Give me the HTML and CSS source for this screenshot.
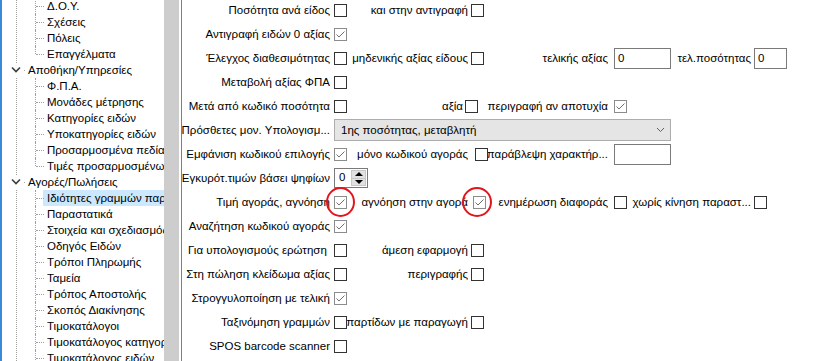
FILE: index.html
```html
<!DOCTYPE html>
<html lang="el">
<head>
    <meta charset="UTF-8">
    <title>Ιδιότητες γραμμών παραστατικών</title>
    <link rel="stylesheet" href="styles.css">
</head>
<body>
<div class="app">
    <div class="tree">
        <ul class="kids">
            <li><span>Δ.Ο.Υ.</span></li>
            <li><span>Σχέσεις</span></li>
            <li><span>Πόλεις</span></li>
            <li><span>Επαγγέλματα</span></li>
        </ul>
        <div class="root">
            <span class="toggle"><svg width="10" height="14" viewBox="0 0 10 14"><polyline points="1,4.5 5,8.5 9,4.5" fill="none" stroke="#3c3c3c" stroke-width="1.6"/></svg></span>
            <span class="stub"></span>Αποθήκη/Υπηρεσίες
        </div>
        <ul class="kids">
            <li><span>Φ.Π.Α.</span></li>
            <li><span>Μονάδες μέτρησης</span></li>
            <li><span>Κατηγορίες ειδών</span></li>
            <li><span>Υποκατηγορίες ειδών</span></li>
            <li><span>Προσαρμοσμένα πεδία</span></li>
            <li><span>Τιμές προσαρμοσμένων πεδίων</span></li>
        </ul>
        <div class="root">
            <span class="toggle"><svg width="10" height="14" viewBox="0 0 10 14"><polyline points="1,4.5 5,8.5 9,4.5" fill="none" stroke="#3c3c3c" stroke-width="1.6"/></svg></span>
            <span class="stub"></span>Αγορές/Πωλήσεις
        </div>
        <ul class="kids">
            <li><span class="selected">Ιδιότητες γραμμών παραστατικών</span></li>
            <li><span>Παραστατικά</span></li>
            <li><span>Στοιχεία και σχεδιασμός τύπων</span></li>
            <li><span>Οδηγός Ειδών</span></li>
            <li><span>Τρόποι Πληρωμής</span></li>
            <li><span>Ταμεία</span></li>
            <li><span>Τρόπος Αποστολής</span></li>
            <li><span>Σκοπός Διακίνησης</span></li>
            <li><span>Τιμοκατάλογοι</span></li>
            <li><span>Τιμοκατάλογος κατηγοριών</span></li>
            <li><span>Τιμοκατάλογος ειδών</span></li>
            <li><span>Εκπτώσεις</span></li>
        </ul>
    </div>
    <div class="splitter"></div>

    <div class="form">
        <div class="row">
            <label class="lbl c1">Ποσότητα ανά είδος</label><span class="cb c2"></span>
            <label class="lbl c3">και στην αντιγραφή</label><span class="cb c4"></span>
        </div>
        <div class="row">
            <label class="lbl c1">Αντιγραφή ειδών 0 αξίας</label><span class="cb on c2"><svg width="11" height="11" viewBox="0 0 11 11"><polyline points="1.5,5.5 4,8 9.5,2.5" fill="none" stroke="#6e6e6e" stroke-width="1"/></svg></span>
        </div>
        <div class="row">
            <label class="lbl c1">Έλεγχος διαθεσιμότητας</label><span class="cb c2"></span>
            <label class="lbl c3">μηδενικής αξίας είδους</label><span class="cb c4"></span>
            <label class="lbl c5">τελικής αξίας</label><span class="field wide c6">0</span>
            <label class="lbl c7">τελ.ποσότητας</label><span class="field c8">0</span>
        </div>
        <div class="row">
            <label class="lbl c1">Μεταβολή αξίας ΦΠΑ</label><span class="cb c2"></span>
        </div>
        <div class="row">
            <label class="lbl c1">Μετά από κωδικό ποσότητα</label><span class="cb c2"></span>
            <label class="lbl c3 pad8">αξία</label><span class="cb c4 back6"></span>
            <label class="lbl c5">περιγραφή αν αποτυχία</label><span class="cb on c6"><svg width="11" height="11" viewBox="0 0 11 11"><polyline points="1.5,5.5 4,8 9.5,2.5" fill="none" stroke="#6e6e6e" stroke-width="1"/></svg></span>
        </div>
        <div class="row">
            <label class="lbl c1">Πρόσθετες μον. Υπολογισμ...</label>
            <div class="combo">
                <span>1ης ποσότητας, μεταβλητή</span>
                <svg width="9" height="6" viewBox="0 0 9 6"><polyline points="1,1 4.5,4.5 8,1" fill="none" stroke="#606060" stroke-width="1"/></svg>
            </div>
        </div>
        <div class="row">
            <label class="lbl c1">Εμφάνιση κωδικού επιλογής</label><span class="cb on c2"><svg width="11" height="11" viewBox="0 0 11 11"><polyline points="1.5,5.5 4,8 9.5,2.5" fill="none" stroke="#6e6e6e" stroke-width="1"/></svg></span>
            <label class="lbl c3">μόνο κωδικού αγοράς</label><span class="cb c4 fwd4"></span>
            <label class="lbl c5">παράβλεψη χαρακτήρ...</label><span class="field wide c6"></span>
        </div>
        <div class="row">
            <label class="lbl c1">Εγκυρότ.τιμών βάσει ψηφίων</label>
            <div class="spin">
                <span class="spin-val">0</span>
                <span class="spin-btns">
                    <span class="arrow up"></span>
                    <span class="arrow down"></span>
                </span>
            </div>
        </div>
        <div class="row">
            <label class="lbl c1">Τιμή αγοράς, αγνόηση</label><span class="cb on c2"><svg width="11" height="11" viewBox="0 0 11 11"><polyline points="1.5,5.5 4,8 9.5,2.5" fill="none" stroke="#6e6e6e" stroke-width="1"/></svg><i class="ring"></i></span>
            <label class="lbl c3">αγνόηση στην αγορά</label><span class="cb on c4 fwd2"><svg width="11" height="11" viewBox="0 0 11 11"><polyline points="1.5,5.5 4,8 9.5,2.5" fill="none" stroke="#6e6e6e" stroke-width="1"/></svg><i class="ring ring-b"></i></span>
            <label class="lbl c5">ενημέρωση διαφοράς</label><span class="cb c6"></span>
            <label class="lbl c7">χωρίς κίνηση παραστ...</label><span class="cb c8"></span>
        </div>
        <div class="row">
            <label class="lbl c1">Αναζήτηση κωδικού αγοράς</label><span class="cb on c2"><svg width="11" height="11" viewBox="0 0 11 11"><polyline points="1.5,5.5 4,8 9.5,2.5" fill="none" stroke="#6e6e6e" stroke-width="1"/></svg></span>
        </div>
        <div class="row">
            <label class="lbl c1">Για υπολογισμούς ερώτηση&nbsp;</label><span class="cb c2"></span>
            <label class="lbl c3">άμεση εφαρμογή</label><span class="cb c4"></span>
        </div>
        <div class="row">
            <label class="lbl c1">Στη πώληση κλείδωμα αξίας</label><span class="cb c2"></span>
            <label class="lbl c3">περιγραφής</label><span class="cb c4"></span>
        </div>
        <div class="row">
            <label class="lbl c1">Στρογγυλοποίηση με τελική</label><span class="cb on c2"><svg width="11" height="11" viewBox="0 0 11 11"><polyline points="1.5,5.5 4,8 9.5,2.5" fill="none" stroke="#6e6e6e" stroke-width="1"/></svg></span>
        </div>
        <div class="row">
            <label class="lbl c1">Ταξινόμηση γραμμών</label><span class="cb c2"></span>
            <label class="lbl c3">παρτίδων με παραγωγή</label><span class="cb c4"></span>
        </div>
        <div class="row">
            <label class="lbl c1">SPOS barcode scanner</label><span class="cb c2"></span>
        </div>
    </div>
</div>
</body>
</html>
```

FILE: styles.css
```css
body {
    margin: 0;
    font-family: "Liberation Sans", Arial, sans-serif;
    font-size: 11.5px;
    color: #000;
    background: #fff;
}
.app {
    display: flex;
    width: 838px;
    height: 361px;
    overflow: hidden;
}

/* tree on the left */
.tree {
    width: 162px;
    flex: none;
    border-left: 2px solid #3a8ad8;
    overflow: hidden;
    white-space: nowrap;
    background: repeating-linear-gradient(to bottom, #a0a0a0 0 1px, transparent 1px 2px) 14px 0 / 1px 100% no-repeat;
}
.tree > :first-child {
    margin-top: -2px;
}
.kids {
    list-style: none;
    margin: 0 0 0 33px;
    padding: 0;
}
.kids li {
    position: relative;
    height: 16px;
    line-height: 16px;
    padding-left: 8px;
}
.kids li::before {
    content: "";
    position: absolute;
    left: 0;
    top: 0;
    height: 16px;
    border-left: 1px dotted #a0a0a0;
}
.kids li:last-child::before {
    height: 8px;
}
.kids li::after {
    content: "";
    position: absolute;
    left: 1px;
    top: 8px;
    width: 8px;
    border-top: 1px dotted #a0a0a0;
}
.kids li span {
    display: block;
    padding-left: 4px;
}
.kids li .selected {
    background: #cce8ff;
}
.root {
    display: flex;
    align-items: center;
    height: 16px;
    line-height: 16px;
}
.toggle {
    width: 10px;
    height: 14px;
    margin-left: 9px;
    background: #fff;
}
.toggle svg {
    display: block;
}
.stub {
    width: 1px;
    height: 1px;
    margin: 0 3px 0 3px;
    background: #a0a0a0;
}

.splitter {
    width: 15px;
    flex: none;
    background: #cdcdcd;
    margin-right: 2px;
}

/* form on the right */
.form {
    flex: 1;
    border-left: 1px solid #808080;
}
.form > .row:first-child {
    margin-top: -2px;
}
.row {
    display: grid;
    grid-template-columns: 152px 13px 124px 13px 130px 57px 83px 33px;
    height: 24px;
    align-items: center;
}
.lbl {
    display: flex;
    justify-content: flex-end;
    white-space: nowrap;
    padding-right: 4px;
}
.c1 { grid-column: 1; }
.c2 { grid-column: 2; }
.c3 { grid-column: 3; padding-right: 3px; }
.c4 { grid-column: 4; }
.c5 { grid-column: 5; padding-right: 6px; }
.c6 { grid-column: 6; }
.c7 { grid-column: 7; padding-right: 3px; }
.c8 { grid-column: 8; }
.lbl.pad8 { padding-right: 8px; }
.back6 { margin-left: -6px; }
.fwd4 { margin-left: 4px; }
.fwd2 { margin-left: 2px; }

.cb {
    position: relative;
    box-sizing: border-box;
    width: 13px;
    height: 13px;
    border: 1px solid #333;
    background: #fff;
}
.cb.on {
    border-color: #8c8c8c;
}
.cb svg {
    display: block;
}
.ring {
    position: absolute;
    left: -9px;
    top: -10px;
    width: 29px;
    height: 30px;
    box-sizing: border-box;
    border: 2px solid #e3141c;
    border-radius: 50%;
}
.ring-b {
    left: -12px;
    width: 30px;
}

.field {
    box-sizing: border-box;
    width: 33px;
    height: 21px;
    border: 1px solid #7a7a7a;
    padding: 2px 3px;
    line-height: 15px;
}
.field.wide {
    width: 57px;
}

.combo {
    grid-column: 2 / 7;
    box-sizing: border-box;
    height: 22px;
    display: flex;
    align-items: center;
    justify-content: space-between;
    padding: 0 5px 0 6px;
    background: #e5e5e5;
    border: 1px solid #adadad;
}

.spin {
    grid-column: 2 / 4;
    justify-self: start;
    box-sizing: border-box;
    width: 34px;
    height: 20px;
    display: flex;
    border: 1px solid #7a7a7a;
}
.spin-val {
    flex: 1;
    padding-left: 4px;
    line-height: 17px;
}
.spin-btns {
    width: 15px;
    display: flex;
    flex-direction: column;
    margin: 1px 1px 1px 0;
}
.arrow {
    flex: 1;
    display: flex;
    align-items: center;
    justify-content: center;
    background: #e1e1e1;
    border: 1px solid #c8c8c8;
}
.arrow + .arrow {
    border-top: none;
}
.arrow::before {
    content: "";
    border-left: 4px solid transparent;
    border-right: 4px solid transparent;
}
.arrow.up::before {
    border-bottom: 4px solid #000;
}
.arrow.down::before {
    border-top: 4px solid #000;
}
```
